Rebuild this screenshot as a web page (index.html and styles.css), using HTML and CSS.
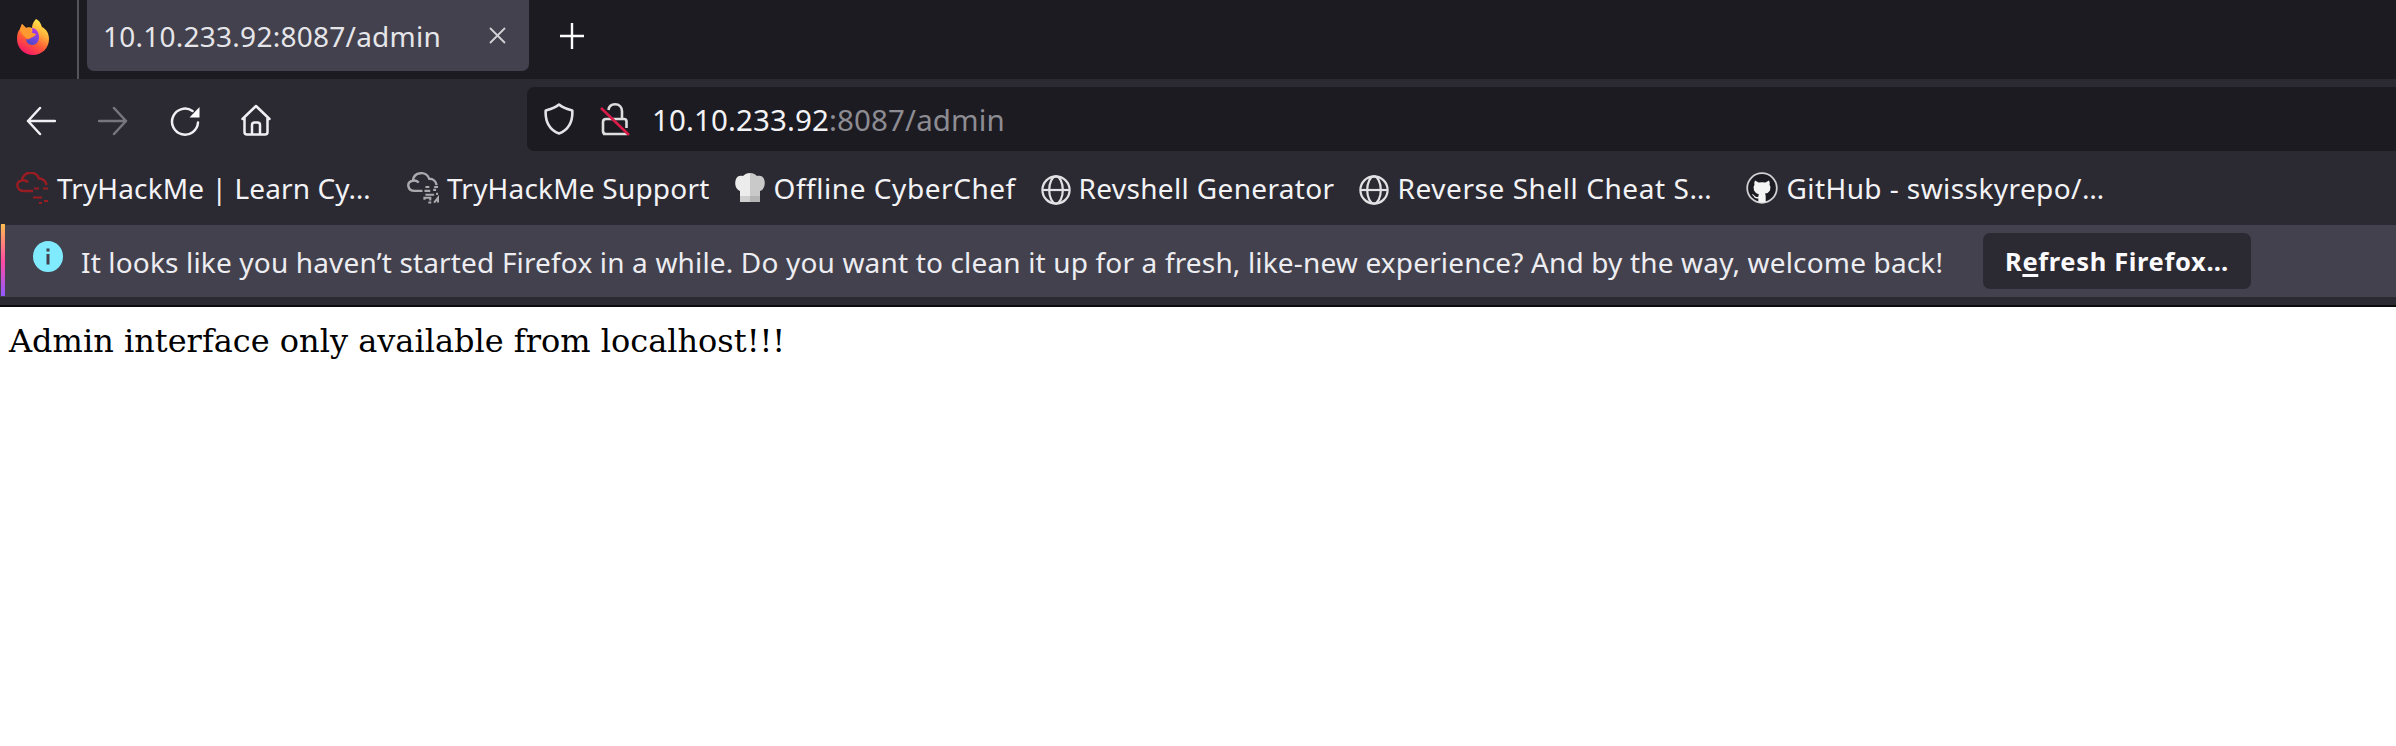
FILE: index.html
```
<!DOCTYPE html>
<html lang="en">
<head>
<meta charset="utf-8">
<title>10.10.233.92:8087/admin</title>
<link rel="stylesheet" href="styles.css">
</head>
<body>
<header class="tabs">
  <div class="view">
    <svg class="fox" viewBox="0 0 32 36">
      <defs>
        <linearGradient id="flame" x1=".8" y1="0" x2=".3" y2="1"><stop offset="0" stop-color="#fff44f"/><stop offset=".35" stop-color="#ffb13b"/><stop offset=".65" stop-color="#ff5a36"/><stop offset="1" stop-color="#f5156c"/></linearGradient>
        <linearGradient id="globe" x1=".7" y1="0" x2=".3" y2="1"><stop offset="0" stop-color="#b833e1"/><stop offset=".5" stop-color="#7a45e0"/><stop offset="1" stop-color="#4b49c4"/></linearGradient>
      </defs>
      <path fill="url(#flame)" d="M19 0c4 2 5 5 6 8 4 2 7 6 7 12 0 9-7 16-16 16S0 29 0 20c0-5 1-8 3-10l2-5 4 4c2-1 4-1 6 0 0-4 2-7 4-9z"/>
      <path fill="url(#globe)" d="M15 9c4 0 7 4 7 9s-3 8-6.500 8c-4 0-6.500-3-6.500-6 2 1 4 0 5-1l4-2c-1-1-3-2-5-2 2-1 3-3 2-6z"/>
      <path fill="#ff9930" d="M3 10l2-5 4 4c2-.6 4 0 5 1-1 3 1 4 5 5 0 2-4 2-6 4-1 1-3 1-4 0-3-3-5-5-6-9z"/>
    </svg>
  </div>
  <div class="tab">
    <span class="tab-title">10.10.233.92:8087/admin</span>
    <svg class="close" viewBox="0 0 17 17"><path d="M1 1l15 15M16 1L1 16"/></svg>
  </div>
  <svg class="plus" viewBox="0 0 24 26"><path d="M12 0v26M0 13h24"/></svg>
</header>
<nav class="toolbar">
  <svg class="nav back" viewBox="0 0 30 30"><path d="M29 15H2M14 2L2 15l12 13"/></svg>
  <svg class="nav forward" viewBox="0 0 30 30"><path d="M1 15h27M16 2l12 13-12 13"/></svg>
  <svg class="nav reload" viewBox="0 0 30 30"><path d="M28 16.500A13 13 0 1 1 22.500 5"/><path class="solid" d="M29.500 1v10.500H19.500z"/></svg>
  <svg class="nav home" viewBox="0 0 30 32"><path d="M1.500 15L15 2l13.500 13M3.500 14v14q0 2.500 2.500 2.500h18q2.500 0 2.500-2.500V14M11 30V21q0-2.500 2.500-2.500h3q2.500 0 2.500 2.500v9"/></svg>
  <div class="url">
    <svg class="shield" viewBox="0 0 30 32"><path d="M15 1.500C11 5 7 6 1.700 7.500 1 19 6 27.500 15 30.500 24 27.500 29 19 28.300 7.500 23 6 19 5 15 1.500z"/></svg>
    <svg class="lock" viewBox="0 0 30 33"><path d="M8.500 7C9 3 11 1.300 15 1.300c4.500 0 7 3 7 7V16M3 31h24M26.500 25V18.500q0-2.500-2.500-2.500H6q-3 0-3 3V28q0 3 3 3"/><path class="slash" d="M1 5l28 27"/></svg>
    <span class="address">10.10.233.92<span class="path">:8087/admin</span></span>
  </div>
</nav>
<div class="bookmarks">
  <div class="bm bm-thm">
    <svg class="cloud" viewBox="0 0 33 32"><path d="M17 19H8C0 19-1 9 6 8.500 7-1 20-2 23 6.500c4 0 7 3 7.500 6.500M6 8.500c3-.5 5 .5 6 2"/><path class="bits" d="M18 16.500h5M27 16.500h5M17 25.500h9M28 29h4M23 31h3"/></svg>
    <span>TryHackMe | Learn Cy…</span>
  </div>
  <div class="bm bm-support">
    <svg class="cloud" viewBox="0 0 33 32"><path d="M16 19H8C0 19-1 9 6 8.500 7-1 20-2 23 6.500c4 0 7 3 7.500 6.500M6 8.500c3-.5 5 .5 6 2"/><path class="bits" d="M19 15h4M28 15h4M18 19h6M27 18h3M19 23h9M30 22h2M18 28v-2h6v3M28 31l4-5v5M22 31h3"/></svg>
    <span>TryHackMe Support</span>
  </div>
  <div class="bm bm-chef">
    <svg class="chef" viewBox="0 0 30 30"><path fill="#ececec" d="M15 0v29H5V18C1 17-1 11 1 6c1-3 4-4 7-3 2-2 4-3 7-3z"/><path fill="#c9c9c9" d="M15 0c3 0 5 1 7 3 3-1 6 0 7 3 2 5 0 11-4 12v11H15z"/><path fill="#777" fill-opacity=".25" d="M5 23h20v6H5z"/></svg>
    <span>Offline CyberChef</span>
  </div>
  <div class="bm bm-revshell">
    <svg class="world" viewBox="0 0 30 30"><circle cx="15" cy="15" r="13.600"/><ellipse cx="15" cy="15" rx="6.800" ry="13.600"/><path d="M1 15h28"/></svg>
    <span>Revshell Generator</span>
  </div>
  <div class="bm bm-cheat">
    <svg class="world" viewBox="0 0 30 30"><circle cx="15" cy="15" r="13.600"/><ellipse cx="15" cy="15" rx="6.800" ry="13.600"/><path d="M1 15h28"/></svg>
    <span>Reverse Shell Cheat S…</span>
  </div>
  <div class="bm bm-github">
    <svg class="github" viewBox="0 0 32 32"><circle cx="16" cy="16" r="14.800" fill="#1c1b22" stroke="#d0d0d3" stroke-width="1.800"/><path fill="#f4f4f4" d="M9 8.500l3.500 2q3.500-.7 7 0l3.500-2q1 2 .5 4 1.800 2.500.5 6-1.300 2.500-5 3 .7 1 .7 3v5.500q-3.700 1-7.400 0v-3.500q-3.500.7-4.800-2.600l-1.700-1.500q1.700-.4 3 1.700 1.300 1.300 3.500.6 0-1.500.7-2.200Q9.500 21.500 8 18.500q-1.300-3.500.5-6Q8 10.500 9 8.500z"/></svg>
    <span>GitHub - swisskyrepo/…</span>
  </div>
</div>
<div class="notice">
  <div class="accent"></div>
  <svg class="info" viewBox="0 0 30 31"><ellipse cx="15" cy="15.500" rx="15" ry="15.500" fill="#80ebff"/><path fill="#42414d" d="M13.500 7.500h3v3h-3zM13.500 13h3v10.500h-3z"/></svg>
  <span class="message">It looks like you haven’t started Firefox in a while. Do you want to clean it up for a fresh, like-new experience? And by the way, welcome back!</span>
  <button class="refresh">R<span class="key">e</span>fresh Firefox…</button>
</div>
<main class="page">Admin interface only available from localhost!!!</main>
</body>
</html>
```
FILE: styles.css
```
* { box-sizing: border-box; }
body {
  margin: 0;
  height: 746px;
  overflow: hidden;
  background: #fff;
  color: #f3f3f6;
  font: 28px/36px "Noto Sans", "Open Sans", sans-serif;
  white-space: nowrap;
}
svg { display: block; flex: none; fill: none; }

.tabs { display: flex; height: 79px; background: #1c1b22; }
.view { width: 79px; padding: 19px 0 0 17px; border-right: 2px solid #55545d; }
.fox { width: 32px; height: 36px; }
.tab {
  display: flex;
  align-items: center;
  width: 442px;
  height: 71px;
  margin-left: 8px;
  padding-left: 16px;
  border-radius: 0 0 7px 7px;
  background: #42414d;
}
.tab-title { width: 386px; letter-spacing: .25px; color: #e6e6ea; }
.close { width: 17px; height: 17px; stroke: #d0d0d5; stroke-width: 1.8; }
.plus { width: 24px; height: 26px; margin: 23px 0 0 31px; stroke: #fbfbfe; stroke-width: 2.4; }

.toolbar { display: flex; align-items: center; height: 80px; background: #2b2a33; }
.nav { width: 30px; height: 30px; stroke: #f0f0f4; stroke-width: 2.5; stroke-linecap: round; stroke-linejoin: round; }
.back { margin-left: 26px; margin-top: 3px; }
.forward { margin-left: 42px; margin-top: 3px; stroke: #77767d; }
.reload { margin-left: 42px; margin-top: 3px; }
.reload .solid { fill: #fff; stroke: none; }
.home { height: 32px; margin-left: 41px; margin-top: 1px; }
.url {
  display: flex;
  flex: 1;
  align-items: center;
  height: 64px;
  margin-left: 256px;
  border-radius: 7px 0 0 7px;
  background: #1c1b22;
}
.shield { width: 30px; height: 32px; margin-left: 17px; stroke: #e3e3e7; stroke-width: 2.6; stroke-linejoin: round; }
.lock { width: 30px; height: 33px; margin-left: 26px; stroke: #dededf; stroke-width: 2.6; }
.lock .slash { stroke: #d81c48; stroke-width: 2.6; }
.address { margin: 2px 0 0 22px; font-size: 29.5px; letter-spacing: .12px; }
.path { color: #8d8c92; }

.bookmarks { display: flex; height: 66px; padding: 0 0 8px 16px; background: #2b2a33; }
.bm { display: flex; flex: none; align-items: center; }
.bm svg { width: 30px; height: 30px; }
.bm .cloud { width: 33px; height: 32px; stroke-width: 2.5; }
.bm .cloud .bits { stroke-width: 2.2; }
.bm-thm { width: 391px; gap: 8px; letter-spacing: .12px; }
.bm-thm .cloud { stroke: #981c22; }
.bm-support { width: 328px; gap: 8px; letter-spacing: .2px; }
.bm-support .cloud { width: 32px; stroke: #aaa9ad; }
.bm-chef { width: 306px; gap: 8.5px; letter-spacing: .55px; }
.bm-revshell { width: 318px; gap: 7.5px; letter-spacing: .35px; }
.bm-cheat { width: 387px; gap: 8.5px; letter-spacing: .56px; }
.bm-github { gap: 8.5px; letter-spacing: .42px; }
.bm .world { margin-top: 4px; stroke: #e2e2e5; stroke-width: 2.2; }
.bm .github { width: 32px; height: 32px; }

.notice {
  display: flex;
  align-items: center;
  height: 82px;
  padding: 0 0 10px 1px;
  border-bottom: 2px solid #0c0c0d;
  background: linear-gradient(#42414d 72px, #2b2a33 72px);
}
.accent { width: 4px; height: 72px; background: linear-gradient(#ffbd4f, #ff4aa2 52%, #9059ff); }
.info { width: 30px; height: 31px; margin: -8px 0 0 28px; }
.message { width: 1902px; margin: 3px 0 0 18px; letter-spacing: .16px; color: #ededf1; }
.refresh {
  width: 268px;
  height: 56px;
  margin: 1px 0 0;
  padding: 0 0 0 22px;
  border: 0;
  border-radius: 7px;
  background: #2b2a33;
  color: #fbfbfe;
  font: bold 25.5px/56px "Noto Sans", "Open Sans", sans-serif;
  letter-spacing: .65px;
  text-align: left;
}
.key { text-decoration: underline; text-decoration-thickness: 3px; text-underline-offset: 3px; text-decoration-skip-ink: none; }

.page { padding: 15px 9px; color: #000; font: 32px/38px "DejaVu Serif", serif; }
```
